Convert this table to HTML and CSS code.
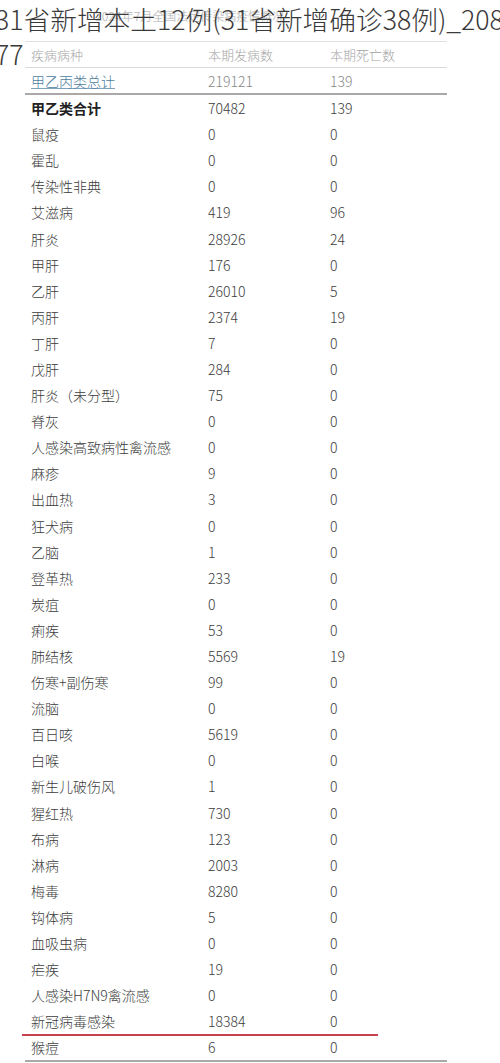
FILE: index.html
```html
<!DOCTYPE html>
<html lang="zh-CN">
<head>
<meta charset="utf-8">
<title>31省新增本土12例</title>
<link rel="stylesheet" href="styles.css">
</head>
<body>
<div class="page">
  <h1 class="title">31省新增本土12例(31省新增确诊38例)_20877</h1>
  <div class="sheet">
    <div class="caption">2024年7月全国法定传染病疫情概况</div>
    <div class="table">
      <div class="row head"><span>疾病病种</span><span>本期发病数</span><span>本期死亡数</span></div>
      <div class="row total"><span class="link">甲乙丙类总计</span><span>219121</span><span>139</span></div>
      <div class="row strong"><span>甲乙类合计</span><span>70482</span><span>139</span></div>
      <div class="row"><span>鼠疫</span><span>0</span><span>0</span></div>
      <div class="row"><span>霍乱</span><span>0</span><span>0</span></div>
      <div class="row"><span>传染性非典</span><span>0</span><span>0</span></div>
      <div class="row"><span>艾滋病</span><span>419</span><span>96</span></div>
      <div class="row"><span>肝炎</span><span>28926</span><span>24</span></div>
      <div class="row"><span>甲肝</span><span>176</span><span>0</span></div>
      <div class="row"><span>乙肝</span><span>26010</span><span>5</span></div>
      <div class="row"><span>丙肝</span><span>2374</span><span>19</span></div>
      <div class="row"><span>丁肝</span><span>7</span><span>0</span></div>
      <div class="row"><span>戊肝</span><span>284</span><span>0</span></div>
      <div class="row"><span>肝炎（未分型）</span><span>75</span><span>0</span></div>
      <div class="row"><span>脊灰</span><span>0</span><span>0</span></div>
      <div class="row"><span>人感染高致病性禽流感</span><span>0</span><span>0</span></div>
      <div class="row"><span>麻疹</span><span>9</span><span>0</span></div>
      <div class="row"><span>出血热</span><span>3</span><span>0</span></div>
      <div class="row"><span>狂犬病</span><span>0</span><span>0</span></div>
      <div class="row"><span>乙脑</span><span>1</span><span>0</span></div>
      <div class="row"><span>登革热</span><span>233</span><span>0</span></div>
      <div class="row"><span>炭疽</span><span>0</span><span>0</span></div>
      <div class="row"><span>痢疾</span><span>53</span><span>0</span></div>
      <div class="row"><span>肺结核</span><span>5569</span><span>19</span></div>
      <div class="row"><span>伤寒+副伤寒</span><span>99</span><span>0</span></div>
      <div class="row"><span>流脑</span><span>0</span><span>0</span></div>
      <div class="row"><span>百日咳</span><span>5619</span><span>0</span></div>
      <div class="row"><span>白喉</span><span>0</span><span>0</span></div>
      <div class="row"><span>新生儿破伤风</span><span>1</span><span>0</span></div>
      <div class="row"><span>猩红热</span><span>730</span><span>0</span></div>
      <div class="row"><span>布病</span><span>123</span><span>0</span></div>
      <div class="row"><span>淋病</span><span>2003</span><span>0</span></div>
      <div class="row"><span>梅毒</span><span>8280</span><span>0</span></div>
      <div class="row"><span>钩体病</span><span>5</span><span>0</span></div>
      <div class="row"><span>血吸虫病</span><span>0</span><span>0</span></div>
      <div class="row"><span>疟疾</span><span>19</span><span>0</span></div>
      <div class="row"><span>人感染H7N9禽流感</span><span>0</span><span>0</span></div>
      <div class="row marked"><span>新冠病毒感染</span><span>18384</span><span>0</span></div>
      <div class="row last"><span>猴痘</span><span>6</span><span>0</span></div>
    </div>
  </div>
</div>
</body>
</html>
```
FILE: styles.css
```css
html, body {
  margin: 0;
  padding: 0;
  background: #fff;
}
body {
  width: 500px;
  height: 1063px;
  overflow: hidden;
  font-family: "Noto Sans CJK SC", "Noto Sans", sans-serif;
}
.page {
  position: relative;
  width: 500px;
  height: 1063px;
}
.title {
  position: absolute;
  top: 1px;
  left: -5px;
  width: 510px;
  margin: 0;
  font-size: 26.7px;
  line-height: 35px;
  font-weight: 300;
  color: #3a3a3a;
  word-break: break-all;
  z-index: 2;
}
.sheet {
  margin-left: 25px;
  width: 422px;
  padding-top: 6px;
}
.caption {
  height: 35px;
  padding-left: 70px;
  font-size: 12px;
  line-height: 20px;
  color: #c4c4c4;
}
.table {
  border-top: 1px solid #e0e0e0;
  border-bottom: 2px solid #a8a8a8;
}
.row {
  display: grid;
  grid-template-columns: 183px 122px 1fr;
  height: 26.1px;
  align-items: center;
  font-size: 14px;
  color: #3c3c3c;
  font-weight: 300;
}
.row span:first-child {
  padding-left: 6px;
}
.row.head {
  height: 25px;
  font-size: 13px;
  color: #a5a5a5;
  border-bottom: 1px solid #dadada;
}
.row.total {
  height: 25px;
  border-bottom: 2px solid #a9a9a9;
  color: #888;
}
.link {
  color: #4d7ea0;
  text-decoration: underline;
  text-decoration-color: #7fa4c0;
}
.row.strong span:first-child {
  font-weight: 700;
  color: #222;
}
.row.marked {
  position: relative;
}
.row.marked::after {
  content: "";
  position: absolute;
  left: -3px;
  width: 356px;
  bottom: -2px;
  height: 2px;
  background: #c9414f;
}
```
